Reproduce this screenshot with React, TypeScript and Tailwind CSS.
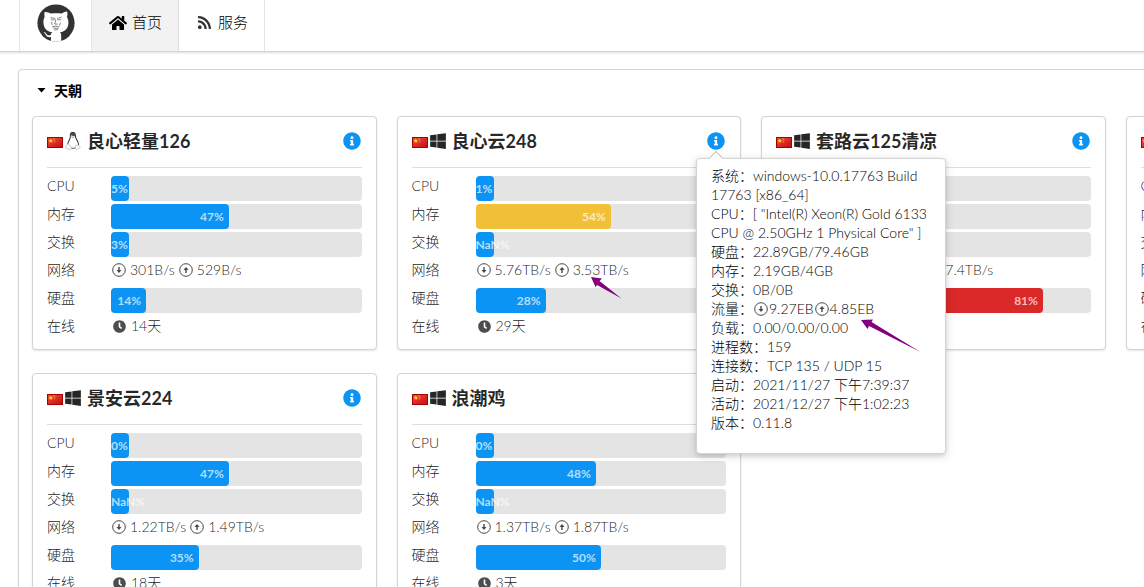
import React from "react";
import { FaClock, FaHome, FaInfoCircle, FaRss, FaWindows } from "react-icons/fa";

type Meter = { text: string; value: number; tone?: "blue" | "yellow" | "red" };

type Server = {
  name: string;
  os: "linux" | "windows";
  cpu: Meter;
  memory: Meter;
  swap: Meter;
  down: string;
  up: string;
  disk: Meter;
  uptime: string;
  open?: boolean;
};

const servers: Server[] = [
  {
    name: "良心轻量126",
    os: "linux",
    cpu: { text: "5%", value: 5 },
    memory: { text: "47%", value: 47 },
    swap: { text: "3%", value: 3 },
    down: "301B/s",
    up: "529B/s",
    disk: { text: "14%", value: 14 },
    uptime: "14天",
  },
  {
    name: "良心云248",
    os: "windows",
    cpu: { text: "1%", value: 1 },
    memory: { text: "54%", value: 54, tone: "yellow" },
    swap: { text: "NaN%", value: 0 },
    down: "5.76TB/s",
    up: "3.53TB/s",
    disk: { text: "28%", value: 28 },
    uptime: "29天",
    open: true,
  },
  {
    name: "套路云125清凉",
    os: "windows",
    cpu: { text: "1%", value: 1 },
    memory: { text: "30%", value: 30 },
    swap: { text: "NaN%", value: 0 },
    down: "12.03TB/s",
    up: "7.4TB/s",
    disk: { text: "81%", value: 81, tone: "red" },
    uptime: "29天",
  },
  {
    name: "云服务器",
    os: "windows",
    cpu: { text: "1%", value: 1 },
    memory: { text: "40%", value: 40 },
    swap: { text: "NaN%", value: 0 },
    down: "1.02TB/s",
    up: "1.15TB/s",
    disk: { text: "30%", value: 30 },
    uptime: "12天",
  },
  {
    name: "景安云224",
    os: "windows",
    cpu: { text: "0%", value: 0 },
    memory: { text: "47%", value: 47 },
    swap: { text: "NaN%", value: 0 },
    down: "1.22TB/s",
    up: "1.49TB/s",
    disk: { text: "35%", value: 35 },
    uptime: "18天",
  },
  {
    name: "浪潮鸡",
    os: "windows",
    cpu: { text: "0%", value: 0 },
    memory: { text: "48%", value: 48 },
    swap: { text: "NaN%", value: 0 },
    down: "1.37TB/s",
    up: "1.87TB/s",
    disk: { text: "50%", value: 50 },
    uptime: "3天",
  },
];

const tones = {
  blue: "bg-[#0b94f3]",
  yellow: "bg-[#f2c037]",
  red: "bg-[#db2828]",
};

function ArrowCircle({ up = false }: { up?: boolean }) {
  return (
    <svg
      viewBox="0 0 14 14"
      className="inline-block size-[14px] shrink-0 align-[-2px] text-[#484848]"
      fill="none"
      stroke="currentColor"
      aria-hidden="true"
    >
      <circle cx="7" cy="7" r="6.3" strokeWidth="1" />
      <g transform={up ? "rotate(180 7 7)" : undefined}>
        <path d="M7 4V8.500" strokeWidth="1.4" />
        <path d="M4.5 7h5L7 10z" fill="currentColor" stroke="none" />
      </g>
    </svg>
  );
}

function Penguin({ className }: { className?: string }) {
  return (
    <svg viewBox="0 0 16 18" className={className} fill="none" aria-hidden="true">
      <path
        d="M5.400 4.200C5.200 1.600 6 .5 7.700.5s2.700 1.300 2.700 3.200c0 2 .5 2.900 1.600 4.500 1.100 1.600 1.600 3 1.500 5"
        stroke="#333"
        strokeWidth="1.1"
      />
      <path d="M5.400 4.200c.1 1.800-.3 2.600-1.200 4-.9 1.500-1.500 2.700-1.400 4" stroke="#333" strokeWidth="1.1" />
      <path d="M5.700 3.200C5.700 1.600 6.400 1 7.800 1c1.300 0 2.100.9 2.200 2.400L8.900 4.300 7.500 3.700z" fill="#444" />
      <path d="M6.400 4.700l1.300.8 1.700-.9" stroke="#777" strokeWidth=".8" />
      <path
        d="M2.800 12.200c-.6.900-1.700 1-1.900 1.700-.1.800.1 1.400-.3 2.200.5.900 3 .7 4.200 1.200 1.100.3 1.700-.3 1.800-1.200-.9-1.400-1.900-2.800-2.800-3.800z"
        fill="#fff"
        stroke="#b5b5b5"
        strokeWidth=".8"
      />
      <path
        d="M13.500 13.200c.2.700 1.800 1.200 1.800 2-.6 1-2.100 1.200-2.900 2-1 .7-2.100.2-2.200-1-.1-1.100.3-2.200.6-3.200.9.800 1.800.8 2.700.2z"
        fill="#fff"
        stroke="#b5b5b5"
        strokeWidth=".8"
      />
      <path d="M6.600 16q1.800.7 3.600 0" stroke="#444" strokeWidth=".9" />
    </svg>
  );
}

function Flag() {
  return (
    <svg viewBox="0 0 16 11" className="mt-[3px] h-[11px] w-4 shrink-0" role="img" aria-label="CN">
      <defs>
        <linearGradient id="flag-shade" x1="0" y1="0" x2="1" y2="1">
          <stop offset="0" stopColor="#ef4a3c" />
          <stop offset="1" stopColor="#c80d10" />
        </linearGradient>
      </defs>
      <rect width="16" height="11" fill="#a80000" />
      <rect x="1" y="1" width="14" height="9" fill="url(#flag-shade)" />
      <path
        d="M3.8 1.4l.7 1.5 1.6.1-1.2 1.1.4 1.6-1.5-.8-1.4.8.3-1.6L1.4 3l1.7-.1z"
        fill="#ffd92e"
      />
      <path d="M6.4 1.2h1v1h-1zM7.3 2.6h1v1h-1zM6.9 4.3h1v1h-1z" fill="#fbb829" />
    </svg>
  );
}

function Logo() {
  return (
    <svg viewBox="0 0 38 38" className="size-[38px]" role="img" aria-label="Logo">
      <circle cx="19" cy="19" r="18.6" fill="#333" />
      <path
        d="M8.600 8c-.8-.2-1.200 0-1.200.8-.1 1.600 0 3 .2 4.500-1.100 1.700-1.300 4-1.100 6.200.5 5.200 3.400 8 8.700 8.800-.9.800-1.300 1.700-1.400 2.700-1.800.8-3.500.4-4.500-1.200-.7-1.200-1.600-1.800-2.900-1.700 1.500.7 1.700 2 2.500 3.200 1 1.600 2.700 2.200 5 1.800l.1 3.800q5.300 1.300 10.200 0V31c-.1-1-.4-1.900-1.200-2.700 5.200-.8 8-3.600 8.400-8.800.2-2.200-.2-4.500-1.400-6.200.4-1.700.5-3.400.3-5-.1-.7-.4-.9-1-.7-1.700.4-3.100 1.100-4.500 2-3.500-.6-7.200-.6-11.200 0-1.400-.8-3-1.300-5-1.600z"
        fill="#fff"
      />
      <path
        d="M13.800 13.700l4 .7M20.600 14.400l3.600-1.200M14.200 15.800h3M20.600 15.700h3.200M18.600 15.800l-.8 4.200 2.600.1M15.500 22.600q3.400-1.400 6.400.2M16.600 24l4.600.3M17.500 25.800l3-.1M23.400 19l-.8 2.400M14.600 18.200l.6 2.400"
        fill="none"
        stroke="#858585"
        strokeWidth="1"
        strokeLinecap="round"
      />
    </svg>
  );
}

function Row({ label, children }: { label: string; children: React.ReactNode }) {
  return (
    <div className="flex h-7">
      <dt className="w-16 shrink-0 leading-7">{label}</dt>
      <dd className="min-w-0 flex-1">{children}</dd>
    </div>
  );
}

function Bar({ text, value, tone = "blue" }: Meter) {
  return (
    <div className="pt-1">
      <div className="h-[25px] rounded bg-[#e4e4e4]">
        <div
          className={`flex h-full min-w-[18px] items-center rounded text-xs font-bold text-white/70 ${tones[tone]} ${
            value > 10 ? "justify-end pr-[5px]" : "justify-start"
          }`}
          style={{ width: `${value}%` }}
        >
          {text}
        </div>
      </div>
    </div>
  );
}

function Details() {
  return (
    <div
      role="tooltip"
      className="absolute -left-[11px] top-[26px] z-10 w-[250px] rounded border border-[#d4d4d5] bg-white px-[14px] pt-[7px] pb-[21px] text-sm font-light leading-[19px] text-black shadow-[0_2px_4px_0_rgba(34,36,38,0.12),0_2px_10px_0_rgba(34,36,38,0.15)]"
    >
      <span className="absolute -top-[6px] left-[14px] size-[10px] rotate-45 border-l border-t border-[#c4c4c5] bg-white" />
      <p>系统：windows-10.0.17763 Build 17763 [x86_64]</p>
      <p>CPU：[ "Intel(R) Xeon(R) Gold 6133 CPU @ 2.50GHz 1 Physical Core" ]</p>
      <p>硬盘：22.89GB/79.46GB</p>
      <p>内存：2.19GB/4GB</p>
      <p>交换：0B/0B</p>
      <p>
        流量：
        <span className="px-px">
          <ArrowCircle />
        </span>
        9.27EB
        <span className="px-px">
          <ArrowCircle up />
        </span>
        4.85EB
      </p>
      <p>负载：0.00/0.00/0.00</p>
      <p>进程数：159</p>
      <p>连接数：TCP 135 / UDP 15</p>
      <p>启动：2021/11/27 下午7:39:37</p>
      <p>活动：2021/12/27 下午1:02:23</p>
      <p>版本：0.11.8</p>
      <svg
        viewBox="0 0 60 34"
        className="absolute left-[164px] top-[160px] h-[34px] w-[60px]"
        fill="#800080"
        aria-hidden="true"
      >
        <path d="M0 1L12 .5 10.500 3 59.500 33 8 7 6.500 10z" />
      </svg>
    </div>
  );
}

function ServerCard({ server }: { server: Server }) {
  const OsIcon = server.os === "linux" ? Penguin : FaWindows;
  return (
    <article className="rounded border border-[#d4d4d5] bg-white px-[14px] pb-[9px] shadow-[0_1px_2px_0_rgba(34,36,38,0.12)]">
      <header className="flex h-[51px] items-center border-b border-[#dededf] pb-[2px]">
        <Flag />
        <OsIcon className="ml-[2px] h-[18px] w-4 shrink-0 text-[#262626]" />
        <h2 className="ml-[6px] flex-1 whitespace-nowrap text-lg font-bold leading-6 text-black/85">
          {server.name}
        </h2>
        <div className="relative mr-px">
          <button type="button" aria-label="详情" className="block text-[#0b94f3]">
            <FaInfoCircle className="size-[18px]" />
          </button>
          {server.open && <Details />}
        </div>
      </header>
      <dl className="pt-1 text-sm font-light text-black/90">
        <Row label="CPU">
          <Bar {...server.cpu} />
        </Row>
        <Row label="内存">
          <Bar {...server.memory} />
        </Row>
        <Row label="交换">
          <Bar {...server.swap} />
        </Row>
        <Row label="网络">
          <div className="relative flex w-max items-center gap-1 pl-px leading-7">
            <ArrowCircle />
            <span>{server.down}</span>
            <ArrowCircle up />
            <span>{server.up}</span>
            {server.open && (
              <svg
                viewBox="0 0 32 23"
                className="absolute left-[114px] top-5 h-[23px] w-8"
                fill="#800080"
                aria-hidden="true"
              >
                <path d="M1 1L12 2.500 9.500 5 31.500 22.500 7 9 5.500 11z" />
              </svg>
            )}
          </div>
        </Row>
        <Row label="硬盘">
          <Bar {...server.disk} />
        </Row>
        <Row label="在线">
          <div className="flex items-center gap-[5px] pl-[2px] leading-7">
            <FaClock className="size-[13px] text-[#4d4d4d]" />
            <span>{server.uptime}</span>
          </div>
        </Row>
      </dl>
    </article>
  );
}

export default function App() {
  return (
    <div className="h-screen overflow-hidden bg-white font-['Lato','Noto_Sans_CJK_SC',sans-serif]">
      <nav className="flex border-b border-[#d4d4d5] pl-[19px] text-[15px] font-light text-black shadow-[0_1px_2px_0_rgba(34,36,38,0.15)]">
        <a href="#" className="flex h-[51px] items-start border-x border-[#e6e6e6] pl-[17px] pr-4 pt-1">
          <Logo />
        </a>
        <a
          href="#"
          aria-current="page"
          className="flex items-center gap-[5px] border-r border-[#dcdcdc] bg-[#f2f2f2] pl-[17px] pr-4 pb-[6px]"
        >
          <FaHome className="size-[18px]" />
          <span>首页</span>
        </a>
        <a href="#" className="flex items-center gap-[6px] border-r border-[#e6e6e6] pl-[18px] pr-4 pb-[6px]">
          <FaRss className="size-[15px] text-[#333]" />
          <span>服务</span>
        </a>
      </nav>
      <main className="min-w-[1502px] px-[18px] pt-[17px]">
        <section className="rounded border border-[#d4d4d5] px-[13px] pb-4 shadow-[0_1px_2px_0_rgba(34,36,38,0.12)]">
          <button
            type="button"
            aria-expanded="true"
            className="flex h-[46px] items-center gap-2 pl-[5px] pb-[5px] text-sm font-bold text-black"
          >
            <svg viewBox="0 0 9 5" className="h-[5px] w-[9px]" fill="currentColor" aria-hidden="true">
              <path d="M.5 0h8L4.500 4.500z" />
            </svg>
            天朝
          </button>
          <div className="grid grid-cols-4 gap-x-5 gap-y-[23px]">
            {servers.map((server) => (
              <ServerCard key={server.name} server={server} />
            ))}
          </div>
        </section>
      </main>
    </div>
  );
}
